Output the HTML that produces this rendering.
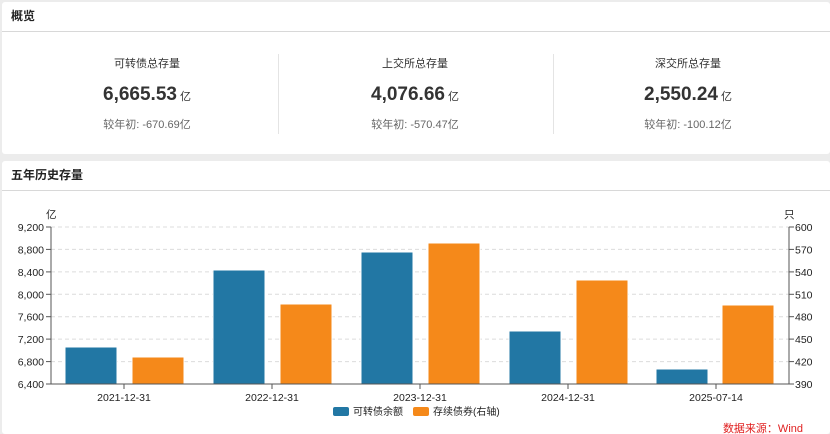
<!DOCTYPE html>
<html><head><meta charset="utf-8"><style>
body{margin:0;width:830px;height:434px;background:#ececec;font-family:"Liberation Sans","Noto Sans CJK SC",sans-serif;position:relative;overflow:hidden}
.p{position:absolute;left:2px;right:0;background:#fff;border-radius:3px}
.h{height:29px;border-bottom:1px solid #d8d8d8;font-size:12px;font-weight:bold;line-height:29px;padding-left:9px;color:#222}
.c{position:absolute;top:51px;width:276px;text-align:center}
.t{font-size:11px;color:#333;height:22px;line-height:22px}
.v{font-size:19px;font-weight:bold;color:#333;margin-top:6px;height:28px;line-height:28px}
.v small{font-size:11px;font-weight:normal;margin-left:3px}
.s{font-size:11px;color:#666;margin-top:7px}
.d{position:absolute;top:52px;width:1px;height:80px;background:#e4e4e4}
</style></head><body>
<div class="p" style="top:2px;height:152px">
<div class="h">概览</div>
<div class="c" style="left:7px"><div class="t">可转债总存量</div><div class="v">6,665.53<small>亿</small></div><div class="s">较年初: -670.69亿</div></div>
<div class="d" style="left:276px"></div>
<div class="c" style="left:275px"><div class="t">上交所总存量</div><div class="v">4,076.66<small>亿</small></div><div class="s">较年初: -570.47亿</div></div>
<div class="d" style="left:551px"></div>
<div class="c" style="left:548px"><div class="t">深交所总存量</div><div class="v">2,550.24<small>亿</small></div><div class="s">较年初: -100.12亿</div></div>
</div>
<div class="p" style="top:161px;height:273px">
<div class="h">五年历史存量</div>
</div>
<svg style="position:absolute;left:0;top:0" width="830" height="434" font-family="Liberation Sans, Noto Sans CJK SC, sans-serif" font-size="10.5">
<g stroke="#dcdcdc" stroke-dasharray="4,3">
<line x1="51" x2="789" y1="227" y2="227"/><line x1="51" x2="789" y1="249.4" y2="249.4"/><line x1="51" x2="789" y1="271.9" y2="271.9"/><line x1="51" x2="789" y1="294.3" y2="294.3"/><line x1="51" x2="789" y1="316.7" y2="316.7"/><line x1="51" x2="789" y1="339.1" y2="339.1"/><line x1="51" x2="789" y1="361.6" y2="361.6"/>
</g>
<g stroke="#fff" stroke-width="1">
<rect x="65" y="347" width="52" height="37" fill="#2277a4"/><rect x="132" y="357" width="52" height="27" fill="#f5891a"/>
<rect x="213" y="270" width="52" height="114" fill="#2277a4"/><rect x="280" y="304" width="52" height="80" fill="#f5891a"/>
<rect x="361" y="252" width="52" height="132" fill="#2277a4"/><rect x="428" y="243" width="52" height="141" fill="#f5891a"/>
<rect x="509" y="331" width="52" height="53" fill="#2277a4"/><rect x="576" y="280" width="52" height="104" fill="#f5891a"/>
<rect x="656" y="369" width="52" height="15" fill="#2277a4"/><rect x="722" y="305" width="52" height="79" fill="#f5891a"/>
</g>
<g stroke="#555"><line x1="51" x2="51" y1="227" y2="384"/><line x1="789" x2="789" y1="227" y2="384"/><line x1="51" x2="789" y1="384" y2="384"/>
<line x1="124" x2="124" y1="384" y2="389"/><line x1="272" x2="272" y1="384" y2="389"/><line x1="420" x2="420" y1="384" y2="389"/><line x1="568" x2="568" y1="384" y2="389"/><line x1="716" x2="716" y1="384" y2="389"/>
<line x1="46" x2="51" y1="227" y2="227"/><line x1="46" x2="51" y1="249.4" y2="249.4"/><line x1="46" x2="51" y1="271.9" y2="271.9"/><line x1="46" x2="51" y1="294.3" y2="294.3"/><line x1="46" x2="51" y1="316.7" y2="316.7"/><line x1="46" x2="51" y1="339.1" y2="339.1"/><line x1="46" x2="51" y1="361.6" y2="361.6"/><line x1="46" x2="51" y1="384" y2="384"/>
<line x1="789" x2="794" y1="227" y2="227"/><line x1="789" x2="794" y1="249.4" y2="249.4"/><line x1="789" x2="794" y1="271.9" y2="271.9"/><line x1="789" x2="794" y1="294.3" y2="294.3"/><line x1="789" x2="794" y1="316.7" y2="316.7"/><line x1="789" x2="794" y1="339.1" y2="339.1"/><line x1="789" x2="794" y1="361.6" y2="361.6"/><line x1="789" x2="794" y1="384" y2="384"/>
</g>
<g fill="#222" text-anchor="end">
<text x="44" y="231">9,200</text><text x="44" y="253.4">8,800</text><text x="44" y="275.9">8,400</text><text x="44" y="298.3">8,000</text><text x="44" y="320.7">7,600</text><text x="44" y="343.1">7,200</text><text x="44" y="365.6">6,800</text><text x="44" y="388">6,400</text>
</g>
<g fill="#222">
<text x="795" y="231">600</text><text x="795" y="253.4">570</text><text x="795" y="275.9">540</text><text x="795" y="298.3">510</text><text x="795" y="320.7">480</text><text x="795" y="343.1">450</text><text x="795" y="365.6">420</text><text x="795" y="388">390</text>
<text x="46" y="218">亿</text><text x="784" y="218">只</text>
</g>
<g fill="#222" text-anchor="middle">
<text x="124" y="401">2021-12-31</text><text x="272" y="401">2022-12-31</text><text x="420" y="401">2023-12-31</text><text x="568" y="401">2024-12-31</text><text x="716" y="401">2025-07-14</text>
</g>
<rect x="333" y="407" width="16" height="9" rx="2" fill="#2277a4"/><text x="353" y="415" fill="#222" font-size="10">可转债余额</text>
<rect x="413" y="407" width="16" height="9" rx="2" fill="#f5891a"/><text x="433" y="415" fill="#222" font-size="10">存续债券(右轴)</text>
<text x="803" y="432" fill="#e02020" font-size="11" text-anchor="end">数据来源：Wind</text>
</svg>
</body></html>
